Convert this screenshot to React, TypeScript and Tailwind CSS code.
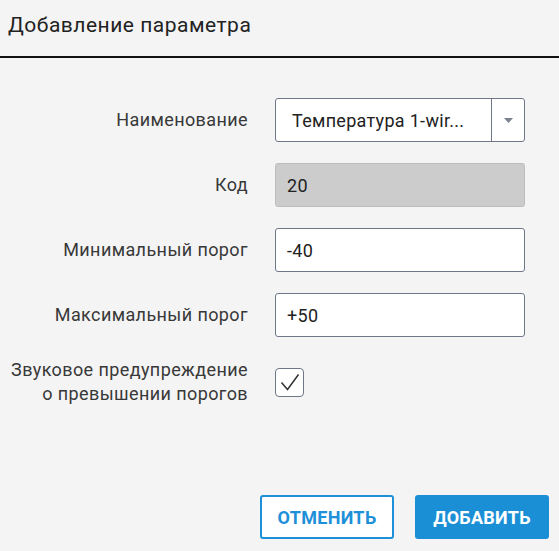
import React from 'react';

const labelCls = 'w-[248px] shrink-0 text-right text-[18px] tracking-[0.4px] leading-[24px] text-[#383838]';
const boxCls = 'h-[44px] w-[250px] rounded-[3px] border-[1.5px] border-[#6f7889] bg-white px-[11px] text-[18px] tracking-[0.3px] text-[#222] flex items-center';

const App: React.FC = () => {
  return (
    <div className="w-[559px] h-[551px] bg-[#f4f4f4] flex flex-col" style={{ fontFamily: 'Roboto, "Noto Sans", sans-serif' }}>
      {/* Header */}
      <div className="h-[56px] px-[8px] pt-[12px] text-[21px] tracking-[0.5px] text-[#222] leading-[26px]">Добавление параметра</div>
      <div className="h-[2px] bg-[#111]" />

      {/* Form */}
      <div className="flex flex-col gap-[21px] pt-[40px]">
        <div className="flex items-center gap-[27px]">
          <div className={labelCls}>Наименование</div>
          <div className="h-[44px] w-[250px] rounded-[3px] border-[1.5px] border-[#6f7889] bg-white flex">
            <div className="flex-1 flex items-center pl-[16px] text-[18px] tracking-[0.3px] text-[#222]">Температура 1-wir...</div>
            <div className="w-[33px] border-l-[1.5px] border-[#6f7889] flex items-center justify-center">
              <svg width="9" height="5" viewBox="0 0 9 5"><path d="M0 0h9L4.5 5z" fill="#7a8190" /></svg>
            </div>
          </div>
        </div>

        <div className="flex items-center gap-[27px]">
          <div className={labelCls}>Код</div>
          <div className="h-[44px] w-[250px] rounded-[3px] border border-[#bdbdbd] bg-[#cccccc] px-[11px] text-[18px] tracking-[0.3px] text-[#222] flex items-center">20</div>
        </div>

        <div className="flex items-center gap-[27px]">
          <div className={labelCls}>Минимальный порог</div>
          <div className={boxCls}>-40</div>
        </div>

        <div className="flex items-center gap-[27px]">
          <div className={labelCls}>Максимальный порог</div>
          <div className={boxCls}>+50</div>
        </div>

        <div className="flex items-center gap-[27px]">
          <div className={labelCls}>
            Звуковое предупреждение
            <br />
            о превышении порогов
          </div>
          <div className="w-[29px] h-[29px] rounded-[4px] border-[1.5px] border-[#6f7889] bg-white flex items-center justify-center">
            <svg width="20" height="18" viewBox="0 0 20 18">
              <path d="M1.5 9.5l6 7L18.5 1.5" fill="none" stroke="#333" strokeWidth="1.5" />
            </svg>
          </div>
        </div>
      </div>

      {/* Buttons */}
      <div className="mt-auto mb-[12px] mr-[10px] flex justify-end gap-[21px]">
        <button className="h-[44px] w-[134px] rounded-[3px] border-2 border-[#1e90d8] bg-white text-[18px] tracking-[0.3px] font-bold text-[#1e90d8] uppercase">
          Отменить
        </button>
        <button className="h-[44px] w-[134px] rounded-[3px] bg-[#1b8fd6] text-[18px] tracking-[0.3px] font-bold text-white uppercase">
          Добавить
        </button>
      </div>
    </div>
  );
};

export default App;
